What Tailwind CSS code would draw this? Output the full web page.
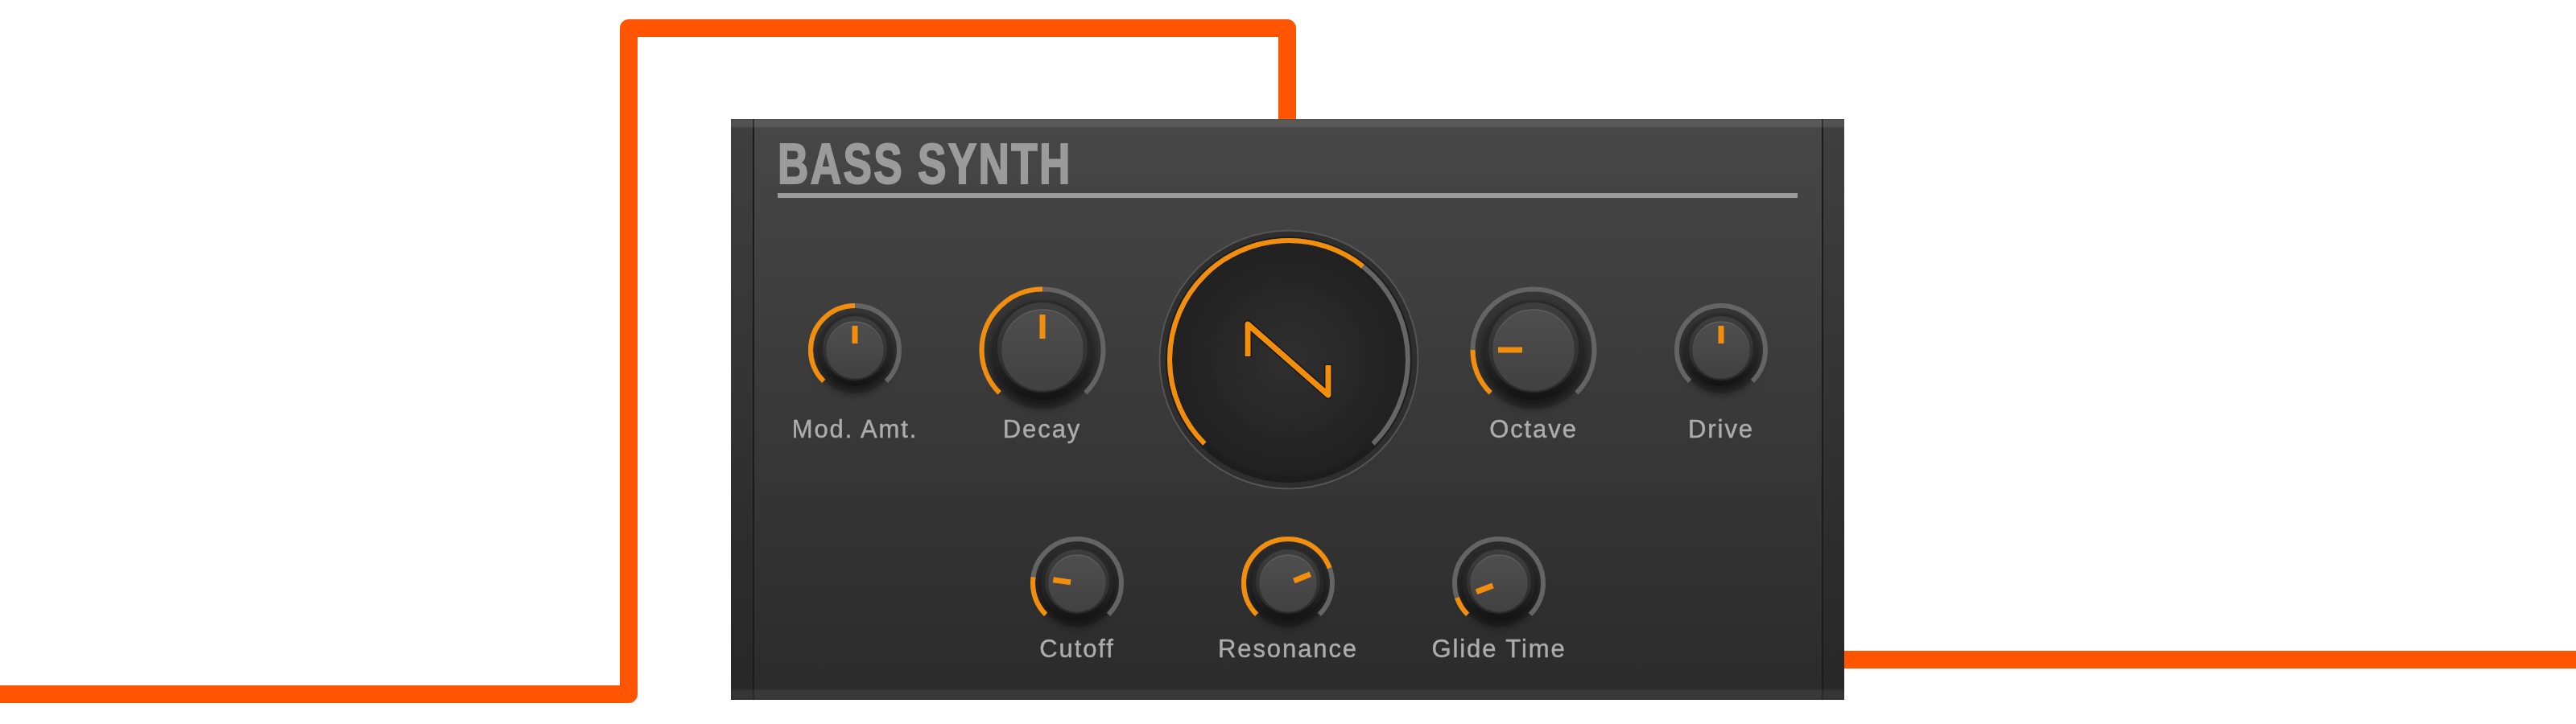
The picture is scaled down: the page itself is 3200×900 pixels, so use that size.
<!doctype html>
<html>
<head>
<meta charset="utf-8">
<script src="https://cdn.jsdelivr.net/npm/@tailwindcss/browser@4"></script>
</head>
<body class="bg-white">
<div class="relative w-[3200px] h-[900px] overflow-hidden bg-white pt-[148px] pl-[908px]">
  <svg class="absolute left-0 top-0" width="3200" height="900" fill="none" stroke="#ff5500" stroke-width="22" stroke-linejoin="round">
    <path d="M0 863H781V35H1599V160"/>
    <path d="M2280 820H3200"/>
    <defs>
      <linearGradient id="body" x1="0" y1="0" x2="0" y2="1"><stop offset="0" stop-color="#2a2a2a"/><stop offset="0.6" stop-color="#252525"/><stop offset="1" stop-color="#131313"/></linearGradient>
      <linearGradient id="collar" x1="0" y1="0" x2="0" y2="1"><stop offset="0" stop-color="#3e3e3e"/><stop offset="1" stop-color="#2a2a2a"/></linearGradient>
      <linearGradient id="cap" x1="0" y1="0" x2="0" y2="1"><stop offset="0" stop-color="#4e4e4e"/><stop offset="1" stop-color="#414141"/></linearGradient>
      <linearGradient id="rim" x1="0" y1="0" x2="0" y2="1"><stop offset="0" stop-color="#5e5e5e"/><stop offset="0.5" stop-color="#474747"/><stop offset="1" stop-color="#414141"/></linearGradient>
      <radialGradient id="dial"><stop offset="0" stop-color="#2f2f2f"/><stop offset="1" stop-color="#212121"/></radialGradient>
      <filter id="soft" x="-50%" y="-50%" width="200%" height="200%"><feGaussianBlur stdDeviation="6"/></filter>
    </defs>
  </svg>

  <div class="relative flex w-[1383px] h-[722px] bg-gradient-to-b from-[#474747] to-[#2b2b2b]">
    <div class="w-[29px] bg-black/10 border-r-2 border-[#1b1b1b]"></div>

    <div class="w-[1326px] flex flex-col pt-[31px]">
      <h1 class="ml-[29px] h-[50px] w-fit origin-left scale-x-[0.76] text-[70px] leading-[50px] tracking-[3px] font-bold text-[#9b9b9b] [-webkit-text-stroke-width:2px] blur-[0.6px] whitespace-nowrap font-['Liberation_Sans',sans-serif]">BASS SYNTH</h1>
      <div class="ml-[29px] mt-[11px] w-[1267px] h-[6px] bg-[#9b9b9b]"></div>

      <div class="mt-[38px] pl-[35px] flex items-start h-[324px] text-[#adadad] text-[31px] leading-[22px] tracking-[1.9px] text-center [-webkit-text-stroke-width:0.4px] font-['Liberation_Sans',sans-serif]">
        <div class="w-[180px] pt-[63px] flex flex-col items-center">
          <div class="h-[176px] flex items-center justify-center">
            <svg class="blur-[0.7px] overflow-visible" width="130" height="130" viewBox="-65 -65 130 130" fill="none">
              <circle r="54" fill="#000" fill-opacity="0.13"/>
              <circle cx="0" cy="7" r="47" fill="#000" fill-opacity="0.5" filter="url(#soft)"/>
              <path d="M-38.89 38.89A55 55 0 1 1 38.89 38.89" stroke="#646464" stroke-width="6"/>
              <path d="M-38.89 38.89A55 55 0 1 1 38.89 38.89" pathLength="270" stroke-dasharray="135 270" stroke="#f28e0c" stroke-width="6"/>
              <circle r="45" fill="url(#body)"/><circle r="40" cy="-2" fill="url(#collar)"/><circle r="35" fill="url(#cap)" stroke="url(#rim)" stroke-width="1.5"/>
              <rect x="-3.5" y="-30" width="7" height="22" fill="#f28e0c"/>
            </svg>
          </div>
          <span class="blur-[0.5px] whitespace-nowrap">Mod. Amt.</span>
        </div>
        <div class="w-[285px] pt-[63px] flex flex-col items-center">
          <div class="h-[176px] flex items-center justify-center">
            <svg class="blur-[0.7px] overflow-visible" width="170" height="170" viewBox="-85 -85 170 170" fill="none">
              <circle r="74" fill="#000" fill-opacity="0.13"/>
              <circle cx="0" cy="8" r="64" fill="#000" fill-opacity="0.5" filter="url(#soft)"/>
              <path d="M-53.39 53.39A75.5 75.5 0 1 1 53.39 53.39" stroke="#646464" stroke-width="6"/>
              <path d="M-53.39 53.39A75.5 75.5 0 1 1 53.39 53.39" pathLength="270" stroke-dasharray="135 270" stroke="#f28e0c" stroke-width="6"/>
              <circle r="62" fill="url(#body)"/><circle r="56" cy="-3" fill="url(#collar)"/><circle r="50" fill="url(#cap)" stroke="url(#rim)" stroke-width="1.5"/>
              <rect x="-3.5" y="-44" width="7" height="30" fill="#f28e0c"/>
            </svg>
          </div>
          <span class="blur-[0.5px] whitespace-nowrap">Decay</span>
        </div>
        <div class="w-[328px] flex justify-center">
          <svg class="blur-[0.7px]" width="326" height="326" viewBox="-163 -163 326 326" fill="none">
            <circle r="160.5" fill="#2e2e2e" stroke="#555555" stroke-width="2"/>
            <circle r="153" fill="#1d1d1d"/>
            <circle r="145" fill="url(#dial)"/>
            <path d="M-104.65 104.65A148 148 0 1 1 104.65 104.65" stroke="#666666" stroke-width="6"/>
            <path d="M-104.65 104.65A148 148 0 1 1 104.65 104.65" pathLength="270" stroke-dasharray="173.4 270" stroke="#f28e0c" stroke-width="6"/>
            <path d="M-51 -3V-44L49 44V6" stroke="#151515" stroke-width="10" stroke-linejoin="round"/>
            <path d="M-51 -4V-44L49 44V7" stroke="#f28e0c" stroke-width="7" stroke-linejoin="round"/>
          </svg>
        </div>
        <div class="w-[280px] pt-[63px] flex flex-col items-center">
          <div class="h-[176px] flex items-center justify-center">
            <svg class="blur-[0.7px] overflow-visible" width="170" height="170" viewBox="-85 -85 170 170" fill="none">
              <circle r="74" fill="#000" fill-opacity="0.13"/>
              <circle cx="0" cy="8" r="64" fill="#000" fill-opacity="0.5" filter="url(#soft)"/>
              <path d="M-53.39 53.39A75.5 75.5 0 1 1 53.39 53.39" stroke="#646464" stroke-width="6"/>
              <path d="M-53.39 53.39A75.5 75.5 0 1 1 53.39 53.39" pathLength="270" stroke-dasharray="45 270" stroke="#f28e0c" stroke-width="6"/>
              <circle r="62" fill="url(#body)"/><circle r="56" cy="-3" fill="url(#collar)"/><circle r="50" fill="url(#cap)" stroke="url(#rim)" stroke-width="1.5"/>
              <rect x="-3.5" y="-44" width="7" height="30" fill="#f28e0c" transform="rotate(-90)"/>
            </svg>
          </div>
          <span class="blur-[0.5px] whitespace-nowrap">Octave</span>
        </div>
        <div class="w-[186px] pt-[63px] flex flex-col items-center">
          <div class="h-[176px] flex items-center justify-center">
            <svg class="blur-[0.7px] overflow-visible" width="130" height="130" viewBox="-65 -65 130 130" fill="none">
              <circle r="54" fill="#000" fill-opacity="0.13"/>
              <circle cx="0" cy="7" r="47" fill="#000" fill-opacity="0.5" filter="url(#soft)"/>
              <path d="M-38.89 38.89A55 55 0 1 1 38.89 38.89" stroke="#646464" stroke-width="6"/>
              <circle r="45" fill="url(#body)"/><circle r="40" cy="-2" fill="url(#collar)"/><circle r="35" fill="url(#cap)" stroke="url(#rim)" stroke-width="1.5"/>
              <rect x="-3.5" y="-30" width="7" height="22" fill="#f28e0c"/>
            </svg>
          </div>
          <span class="blur-[0.5px] whitespace-nowrap">Drive</span>
        </div>
      </div>

      <div class="mt-[46px] pl-[270px] flex items-start text-[#adadad] text-[31px] leading-[22px] tracking-[1.9px] text-center [-webkit-text-stroke-width:0.4px] font-['Liberation_Sans',sans-serif]">
        <div class="w-[262px] flex flex-col items-center">
          <div class="h-[142px] flex items-center justify-center">
            <svg class="blur-[0.7px] overflow-visible" width="130" height="130" viewBox="-65 -65 130 130" fill="none">
              <circle r="54" fill="#000" fill-opacity="0.13"/>
              <circle cx="0" cy="7" r="47" fill="#000" fill-opacity="0.5" filter="url(#soft)"/>
              <path d="M-38.89 38.89A55 55 0 1 1 38.89 38.89" stroke="#646464" stroke-width="6"/>
              <path d="M-38.89 38.89A55 55 0 1 1 38.89 38.89" pathLength="270" stroke-dasharray="53 270" stroke="#f28e0c" stroke-width="6"/>
              <circle r="45" fill="url(#body)"/><circle r="40" cy="-2" fill="url(#collar)"/><circle r="35" fill="url(#cap)" stroke="url(#rim)" stroke-width="1.5"/>
              <rect x="-3.5" y="-30" width="7" height="22" fill="#f28e0c" transform="rotate(-82)"/>
            </svg>
          </div>
          <span class="blur-[0.5px] whitespace-nowrap">Cutoff</span>
        </div>
        <div class="w-[262px] flex flex-col items-center">
          <div class="h-[142px] flex items-center justify-center">
            <svg class="blur-[0.7px] overflow-visible" width="130" height="130" viewBox="-65 -65 130 130" fill="none">
              <circle r="54" fill="#000" fill-opacity="0.13"/>
              <circle cx="0" cy="7" r="47" fill="#000" fill-opacity="0.5" filter="url(#soft)"/>
              <path d="M-38.89 38.89A55 55 0 1 1 38.89 38.89" stroke="#646464" stroke-width="6"/>
              <path d="M-38.89 38.89A55 55 0 1 1 38.89 38.89" pathLength="270" stroke-dasharray="205 270" stroke="#f28e0c" stroke-width="6"/>
              <circle r="45" fill="url(#body)"/><circle r="40" cy="-2" fill="url(#collar)"/><circle r="35" fill="url(#cap)" stroke="url(#rim)" stroke-width="1.5"/>
              <rect x="-3.5" y="-30" width="7" height="22" fill="#f28e0c" transform="rotate(68)"/>
            </svg>
          </div>
          <span class="blur-[0.5px] whitespace-nowrap">Resonance</span>
        </div>
        <div class="w-[262px] flex flex-col items-center">
          <div class="h-[142px] flex items-center justify-center">
            <svg class="blur-[0.7px] overflow-visible" width="130" height="130" viewBox="-65 -65 130 130" fill="none">
              <circle r="54" fill="#000" fill-opacity="0.13"/>
              <circle cx="0" cy="7" r="47" fill="#000" fill-opacity="0.5" filter="url(#soft)"/>
              <path d="M-38.89 38.89A55 55 0 1 1 38.89 38.89" stroke="#646464" stroke-width="6"/>
              <path d="M-38.89 38.89A55 55 0 1 1 38.89 38.89" pathLength="270" stroke-dasharray="26 270" stroke="#f28e0c" stroke-width="6"/>
              <circle r="45" fill="url(#body)"/><circle r="40" cy="-2" fill="url(#collar)"/><circle r="35" fill="url(#cap)" stroke="url(#rim)" stroke-width="1.5"/>
              <rect x="-3.5" y="-30" width="7" height="22" fill="#f28e0c" transform="rotate(-111)"/>
            </svg>
          </div>
          <span class="blur-[0.5px] whitespace-nowrap">Glide Time</span>
        </div>
      </div>
    </div>

    <div class="w-[28px] bg-black/10 border-l-2 border-[#1b1b1b]"></div>
    <div class="absolute left-0 right-0 top-0 h-[10px] bg-white/10 blur-[1px]"></div>
    <div class="absolute left-0 right-0 bottom-0 h-[13px] bg-white/7 blur-[1px]"></div>
  </div>
</div>
</body>
</html>
